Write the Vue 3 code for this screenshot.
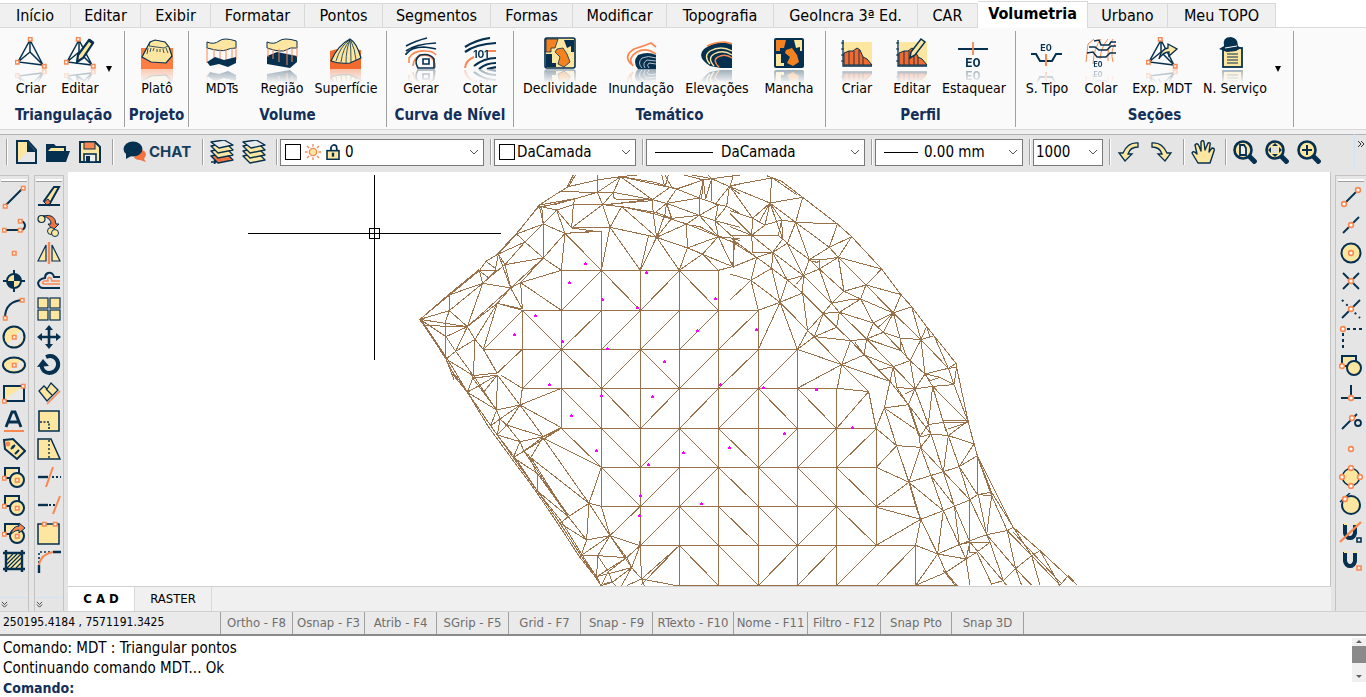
<script setup>
import { ref } from 'vue'

const N = '#06304f'
const O = '#f98850'
const C = '#fce6a0'

const sq = (x, y) => `<rect x="${x - 1.5}" y="${y - 1.5}" width="3.5" height="3.5" fill="#fff" stroke="${O}" stroke-width="1.5"/>`
const dot = (x, y) => `<circle cx="${x}" cy="${y}" r="2.4" fill="#fff" stroke="${O}" stroke-width="1.6"/>`
const ln = (d, w = 2, c = N, f = 'none') => `<path d="${d}" fill="${f}" stroke="${c}" stroke-width="${w}"/>`
const word = (x, y, s, t) => `<text x="${x}" y="${y}" font-family="Inter, sans-serif" font-size="${s}" font-weight="700" text-anchor="middle" fill="${N}">${t}</text>`

const tin = ln('M15 3 3 25 28 28ZM15 3 15 15 3 25M15 15 28 28', 1.5)
const shapes = ln('M3 3H17V13H3Z', 2, N, '#e8e8e8') + `<path d="M4 4H16L4 12Z" fill="${C}"/>` + `<circle cx="15" cy="15" r="7" fill="${C}" stroke="${N}" stroke-width="2"/>`
const magnifier = `<circle cx="10" cy="10" r="8.5" fill="${C}" stroke="${N}" stroke-width="2.6"/><path d="M16 16 23 23" stroke="${N}" stroke-width="5"/>`
const profile = `<rect x="3" y="5" width="28" height="23" fill="${C}"/><path d="M3 28V16L8 14 12 14 16 11 19 13 22 20 26 22 31 28Z" fill="#f26a2e" stroke="${N}" stroke-width="1"/>` + ln('M2 3V29H31', 1.3) + ln('M8 14V28M13 14V28M18 13V28M22 20V28', .9) + ln('M0 6H3M0 12H3M0 18H3M0 24H3', 1.2)
const layers = (c) => `<g stroke="${N}" stroke-width="1.4" stroke-linejoin="round"><path d="M1 16 16 13 23 20 8 23Z" fill="${c}"/><path d="M1 11 16 8 23 15 8 18Z" fill="${C}"/><path d="M1 6 16 3 23 10 8 13Z" fill="${C}"/><path d="M1 2 14 0 23 5 9 8Z" fill="#e8eaec"/></g>`

const icons = {
  tin: tin + sq(15, 2) + sq(2, 25) + sq(29, 29),
  tinEdit: tin + sq(14, 2) + sq(2, 25) + sq(29, 29) + ln('M25 3 29 6 19 21 13 25 14 18Z', 2.2, N, C) + ln('M25 3 29 6', 3),
  plateau: `<rect y="11" width="32" height="21" fill="#fa7d43"/><path d="M1 20 9 5 14 3 24 5 28 10 31 19 25 26 10 25Z" fill="${C}" stroke="${N}" stroke-width="1.2"/>` + ln('M9 5 8 9 23 11 27 9M7 11 6 17M10 11 9 15M13 11 12 14M16 12V15M19 12V15M22 12 23 16M25 11 27 16', .8),
  mdts: `<path d="M1 5Q8 8 13 4T30 4L30 11Q24 11 20 13T1 11Z" fill="${C}" stroke="${N}" stroke-width="1"/>` + ln('M1 11V26M8 12V24M14 12V22M20 12V26M26 11V24M30 10V23', 1, O) + `<path d="M1 25 9 20 18 23 30 20V26L22 30 13 27 4 29Z" fill="${N}"/>`,
  region: `<path d="M1 5Q8 8 13 4T31 4V11Q24 10 20 13T1 11Z" fill="${C}" stroke="${N}" stroke-width="1"/><path d="M1 19 11 15 31 19V25L24 31 1 27Z" fill="${N}"/>` + ln('M2 11V20M7 12V22M13 12V25M21 12V28M26 11V25M31 10V20', 1, O),
  surface: `<path d="M0 14 7 12 31 13V32H0Z" fill="#f26a2e"/><path d="M1 24Q8 8 20 2Q27 6 31 21L20 26Q9 27 1 24Z" fill="${C}" stroke="${N}" stroke-width="1.2"/>` + ln('M19 3Q10 10 6 24M20 3Q13 11 11 25M20 3Q16 12 16 26M20 3Q21 12 21 25M21 4Q25 12 26 23', .8),
  contour: ln('M1 9Q10 4 22 1M1 14Q10 7 31 6M1 18V17Q6 10 19 10Q27 11 31 12', 1.7) + ln('M4 26 4 21Q9 13 21 14Q28 14 31 18M8 29Q9 18 20 18Q28 19 30 27L30 31', 1.6, O) + ln('M13 31Q8 23 15 18Q25 16 29 22V31ZM18 22H24V27H18Z', 1.6),
  contourTag: ln('M1 10Q12 3 26 1M1 15Q12 7 32 6', 2.2) + ln('M1 31Q2 23 10 20M24 14H32', 2, O) + word(17, 21, 10, '101') + ln('M10 29Q20 21 32 21M15 32Q22 26 32 26M23 32 32 30', 2.2),
  slope: `<rect x="1" y="1" width="30" height="30" rx="2" fill="${C}"/><path d="M2 2H14L11 11H7V15H2ZM13 12 19 11 23 17 26 25 20 30 14 27 16 20 11 15Z" fill="#f58220"/><path d="M20 3H30V15H27V9L23 11ZM2 17H8V26H12V30H2Z" fill="${N}"/><path d="M2 2H14L11 11H7V15H2ZM13 12 19 11 23 17 26 25 20 30 14 27 16 20 11 15Z" fill="none" stroke="${N}" stroke-width=".8"/><rect x="1" y="1" width="30" height="30" rx="2" fill="none" stroke="${N}" stroke-width="1.6"/>`,
  flood: ln('M6 27Q-2 19 9 12Q19 9 26 6L31 10M8 29Q2 21 12 15Q21 10 31 17', 1.8, O) + `<path d="M13 32Q7 25 13 18Q23 14 31 18V32Z" fill="${N}"/>` + ln('M17 31Q12 26 17 21Q23 18 31 21M20 31Q17 26 22 23L31 24M24 31Q21 28 24 26L31 27', .8, '#dfe3e8'),
  elevation: `<path d="M9 29Q-5 20 3 12Q10 6 23 5L31 6V31H20Z" fill="${N}"/>` + ln('M6 9Q14 5 24 5L31 7', 1.5, O) + ln('M9 27Q2 19 9 14Q20 8 31 14', 1.4, C) + ln('M13 29Q6 21 13 17Q22 12 31 18', 1.4, C) + ln('M18 30Q11 23 17 20Q24 16 31 21', 1.4, O),
  spot: `<rect x="1" y="1" width="30" height="30" rx="2" fill="${N}"/><path d="M3 3H13L11 11H7V14H3ZM13 13 19 11 24 18 26 25 20 29 14 26 17 20 12 16Z" fill="#f58220"/><path d="M21 3H29V14H27V10L23 11ZM3 17H8V26H11V29H3Z" fill="${C}"/>`,
  profile,
  profileEdit: profile + ln('M25 2 29 5 19 18 14 21 15 15Z', 1.5, N, C),
  stake: ln('M0 12H30', 2) + ln('M15 5V18', 1.8, O) + word(15, 30, 12, 'E0'),
  section: word(15, 14, 9, 'E0') + ln('M0 17H5L9 24H21L25 17H31', 2) + ln('M15 17V29', 2, O),
  paste: ln('M9 2 3 7 1 25M16 2Q9 10 8 27M23 2Q16 10 15 22M28 2Q22 9 23 24M30 7Q25 14 28 25', 1, O) + ln('M9 4 14 3 16 8H24L26 5H31M4 10 10 10 14 13H22L26 9H31M2 16 8 15 12 20H21L25 16H31', 1.5) + word(13, 30, 7, 'E0'),
  tinExport: tin + sq(14, 2) + sq(2, 25) + sq(29, 29) + `<path d="M13 22Q15 12 22 11V7L31 12 23 19V15Q17 15 13 22Z" fill="${C}" stroke="${N}" stroke-width="1.3"/>`,
  service: `<rect x="4" y="11" width="19" height="19" fill="${C}" stroke="${N}" stroke-width="1.8"/>` + ln('M8 17H19M8 20H19M8 23H19M8 26H19', 1.2) + `<path d="M0 12 5 9Q3 0 12 0Q19 1 19 9L22 11 17 14 8 15Z" fill="${N}"/><path d="M6 11 18 9" stroke="#fff" stroke-width="1"/>`,

  newFile: `<path d="M3 1H14L22 10V23H3Z" fill="#e8e8e8" stroke="${N}" stroke-width="2"/><path d="M4 2H13V12L4 21Z" fill="${C}"/><path d="M13 1 22 12H13Z" fill="${N}"/>`,
  open: `<path d="M0 22V4H8L10 6H20V11H24L20 22Z" fill="${N}"/><path d="M2 11 5 8H18V11Z" fill="${C}"/>`,
  save: `<path d="M2 2H17L22 7V22H2Z" fill="${C}" stroke="${N}" stroke-width="2"/><rect x="6" y="2" width="11" height="7" fill="${O}" stroke="${N}"/><rect x="6" y="14" width="12" height="8" fill="#eee" stroke="${N}" stroke-width="1.6"/><rect x="8" y="16" width="4" height="6" fill="${N}"/>`,
  chat: `<path d="M19 10Q23 11 23 15L21 19 23 22 17 20Q12 20 11 17Z" fill="#f07340"/><ellipse cx="10" cy="9" rx="9.5" ry="7.5" fill="${N}"/><path d="M3 12 3 19 10 15Z" fill="${N}"/>`,
  layerPick: layers('#f07340') + ln('M1 22H6M4 20 6 22 4 24', 1.4),
  layers: layers(C),
  undo: `<path d="M21 3Q11 2 6 13H2L8 21 15 14H11Q13 7 21 7Z" fill="${C}" stroke="${N}" stroke-width="1.3"/>`,
  redo: `<path d="M3 3Q13 2 18 13H22L16 21 9 14H13Q11 7 3 7Z" fill="${C}" stroke="${N}" stroke-width="1.3"/>`,
  hand: `<path d="M7 23 1 13Q2 10 6 14L4 5Q6 2 8 6L10 11 10 2Q12-1 13 2L14 10 17 3Q20 2 19 5L18 12 21 8Q24 8 23 11L19 23Z" fill="${C}" stroke="${N}" stroke-width="1.4" stroke-linejoin="round"/>`,
  zoomPage: magnifier + `<path d="M7 5H11L13 8V15H7Z" fill="#eee" stroke="${N}" stroke-width="1.8"/>`,
  zoomAll: magnifier + `<path d="M10 3 13 6H7ZM10 17 13 14H7ZM3 10 6 7V13ZM17 10 14 7V13Z" fill="${N}"/><rect x="7" y="7" width="6" height="6" fill="#ddd"/>`,
  zoomIn: magnifier + ln('M10 5V15M5 10H15', 2),

  line: ln('M3 21 21 3', 2) + sq(3, 21) + sq(21, 3),
  polyline: ln('M2 17H18Q23 17 23 12Q22 8 18 8', 2) + sq(2, 17) + sq(18, 17) + sq(18, 8),
  point: sq(12, 12),
  target: ln('M12 1V23M1 12H23', 2) + `<circle cx="12" cy="12" r="7" fill="${C}" stroke="${N}" stroke-width="2"/><path d="M12 5A7 7 0 0 1 19 12H12ZM12 19A7 7 0 0 1 5 12H12Z" fill="${N}"/>`,
  arc: ln('M3 21Q3 4 21 3', 2) + sq(3, 21) + sq(20, 3),
  circle: `<circle cx="12" cy="12" r="10.5" fill="${C}" stroke="${N}" stroke-width="2"/><path d="M12 12 19 5A10 10 0 0 1 5 19Z" fill="#e8e8e8"/>` + sq(12, 12),
  ellipse: `<ellipse cx="12" cy="12" rx="11" ry="7.5" fill="${C}" stroke="${N}" stroke-width="2"/><path d="M12 12 20 8Q24 12 17 17L7 17Z" fill="#e8e8e8"/>` + sq(12, 12),
  rect: `<rect x="2" y="5" width="20" height="15" fill="#e8e8e8" stroke="${N}" stroke-width="2"/><path d="M3 6H20L3 18Z" fill="${C}"/>` + sq(2, 20) + sq(21, 5),
  letter: ln('M4 18 10 3H13L19 18M7 13H16', 2.8) + ln('M2 22H22', 2, O),
  tag: `<path d="M2 3 11 2 23 14 15 22 3 12Z" fill="${C}" stroke="${N}" stroke-width="2"/><circle cx="6" cy="7" r="2.4" fill="${O}"/>` + ln('M9 12 13 8M10 9 12 11M13 17 17 13', 2),
  shapes: shapes + sq(2, 13) + sq(15, 15),
  shapesArrow: shapes + `<path d="M9 13Q11 5 17 5V2L23 7 17 12V9Q13 9 9 13Z" fill="${O}" stroke="${N}"/>` + sq(2, 13) + sq(15, 15),
  hatch: `<rect x="5" y="5" width="14" height="14" fill="${C}"/>` + ln('M5 11 11 5M5 15 15 5M5 19 19 5M9 19 19 9M14 19 19 14', 1.2) + ln('M4 1V23M20 1V23M1 4H23M1 20H23', 2.4),
  erase: `<path d="M7 16 17 2H22L12 20Z" fill="${C}" stroke="${N}" stroke-width="2"/><path d="M7 17 11 14 14 18 10 20Z" fill="#f07340" stroke="${N}"/>` + ln('M1 20H23', 2),
  copy: `<circle cx="4.500" cy="6" r="3.500" fill="${C}" stroke="${N}" stroke-width="1.2"/><path d="M6 3Q18 0 19 11H22L16 17 11 11H14Q14 5 6 3Z" fill="#f07340" stroke="${N}"/><circle cx="14" cy="18" r="3.500" fill="${C}" stroke="${N}"/><circle cx="18" cy="20" r="3.500" fill="${C}" stroke="${N}"/>`,
  mirror: ln('M1 20 9 4V20ZM23 20 15 4V20Z', 1.2, N, C) + ln('M12 1V23', 2.4, O),
  offset: ln('M23 8H17Q16 3 11 4 8 5 8 9 2 10 1 14 2 19 6 19H23', 2) + ln('M23 15H7Q4 14 7 12H11Q10 7 14 9L15 12H23', 1.5, O),
  array: [[1, 1], [13, 1], [1, 13], [13, 13]].map(([x, y]) => `<rect x="${x}" y="${y}" width="10" height="10" fill="${C}" stroke="${N}" stroke-width="1.2"/>`).join(''),
  move: ln('M12 3V21M3 12H21', 2.6) + `<path d="M12 0 16 5H8ZM12 24 16 19H8ZM0 12 5 8V16ZM24 12 19 8V16Z" fill="${N}"/>`,
  rotate: ln('M9 4Q16 1 20 7 23 13 18 18 12 22 7 18 4 15 5 12', 4) + `<path d="M0 14 6 6 12 13Z" fill="${N}"/>`,
  align: `<path d="M2 10 7 5 10 8 14 2 21 9 10 20Z" fill="${C}" stroke="${N}" stroke-width="1.3"/>` + ln('M9 8 15 14', 1.3) + ln('M10 23 23 10', 1.6, O),
  scale: ln('M2 2H22V22H2Z', 1.6, N, C) + `<path d="M3 13H12V21" fill="none" stroke="${N}" stroke-width="1.6" stroke-dasharray="2 1.500"/>`,
  stretch: ln('M1 2H14L23 22H1Z', 1.5, N, C) + `<path d="M12 3V21" fill="none" stroke="${N}" stroke-width="1.4" stroke-dasharray="2 2"/>`,
  trim: ln('M1 12H11', 2.4) + ln('M9 22 16 2', 2, O) + `<path d="M15 12H24" stroke="${N}" stroke-width="2" stroke-dasharray="2 2"/>`,
  extend: ln('M1 12H11', 2.4) + ln('M16 21 23 3', 2, O) + `<path d="M12 12H19" stroke="${N}" stroke-width="2" stroke-dasharray="2 2"/>`,
  breakAt: ln('M1 3H22V23H1Z', 1.5, N, C) + sq(7, 3) + sq(18, 3),
  fillet: `<path d="M2 14V3H14" fill="none" stroke="${N}" stroke-width="1.6" stroke-dasharray="2 2"/>` + ln('M2 24V16M16 3H24', 2.4) + ln('M2 16Q4 5 16 3', 2, O),

  endpoint: ln('M5 19 19 5', 1.8) + dot(5, 19) + dot(19, 5),
  midpoint: ln('M4 20 20 4', 1.8) + dot(12, 12),
  center: `<circle cx="12" cy="12" r="9.500" fill="${C}" stroke="${N}" stroke-width="2"/>` + dot(12, 12),
  cross: ln('M4 4 20 20M4 20 20 4', 1.8) + dot(12, 12),
  apparent: ln('M3 21 21 3', 1.8) + `<path d="M3 3 21 21" stroke="${N}" stroke-width="2" stroke-dasharray="2 4"/>` + dot(12, 12),
  extension: `<path d="M8 4H24M4 8V24" stroke="${N}" stroke-width="2" stroke-dasharray="3 3"/>` + dot(4, 4),
  insert: shapes + dot(3, 13),
  perpendicular: ln('M12 4V16M2 17H22', 2) + dot(12, 17),
  tangent: ln('M3 20 18 5', 1.8) + `<circle cx="19" cy="14" r="3" fill="none" stroke="${N}" stroke-width="1.8"/>` + dot(13, 9),
  node: dot(12, 12),
  quadrant: `<circle cx="12" cy="12" r="8.500" fill="${C}" stroke="${N}" stroke-width="1.5"/>` + dot(12, 3) + dot(3, 12) + dot(21, 12) + dot(12, 21),
  near: ln('M1 9 11 0', 1.5) + `<circle cx="12" cy="12" r="9" fill="${C}" stroke="${N}" stroke-width="2"/>` + dot(6, 6),
  snapOff: ln('M6 3V12Q7 17 11 17 15 17 16 12V3', 4) + `<path d="M5 3H8M14 3H18" stroke="${C}" stroke-width="2"/>` + ln('M1 21 22 1', 2.4, O) + ln('M18 17H22V21H18Z', 1.6),
  snapOn: ln('M6 3V12Q7 17 11 17 15 17 16 12V3', 4) + `<path d="M5 3H8M14 3H18" stroke="${C}" stroke-width="2"/>` + ln('M18 17H22V21H18Z', 1.6, O),
  sun: `<circle cx="12" cy="12" r="5.500" fill="${C}" stroke="${O}" stroke-width="2"/>` + ln('M12 0V4M12 20V24M0 12H4M20 12H24M3 3 6 6M18 18 21 21M3 21 6 18M18 6 21 3', 2, O),
  lock: ln('M9 10V5Q12-1 17 3L18 9', 2.6) + `<rect x="3" y="10" width="18" height="13" fill="${C}" stroke="${N}" stroke-width="2.4"/><path d="M12 13V19" stroke="${N}" stroke-width="3.500"/>`
}

const activeTab = ref('Volumetria')
const tabs = [
  ['Início', 71], ['Editar', 70], ['Exibir', 70], ['Formatar', 94], ['Pontos', 78], ['Segmentos', 108], ['Formas', 82],
  ['Modificar', 94], ['Topografia', 107], ['GeoIncra 3ª Ed.', 144], ['CAR', 60], ['Volumetria', 110], ['Urbano', 80], ['Meu TOPO', 108]
]
const groups = [
  { title: 'Triangulação', w: 122, more: true, tools: [['tin', 'Criar', 50], ['tinEdit', 'Editar', 48]] },
  { title: 'Projeto', w: 64, tools: [['plateau', 'Platô', 58]] },
  { title: 'Volume', w: 198, tools: [['mdts', 'MDTs', 60], ['region', 'Região', 60], ['surface', 'Superfície', 68]] },
  { title: 'Curva de Nível', w: 127, tools: [['contour', 'Gerar', 62], ['contourTag', 'Cotar', 56]] },
  { title: 'Temático', w: 312, tools: [['slope', 'Declividade', 86], ['flood', 'Inundação', 76], ['elevation', 'Elevações', 76], ['spot', 'Mancha', 68]] },
  { title: 'Perfil', w: 190, tools: [['profile', 'Criar', 56], ['profileEdit', 'Editar', 54], ['stake', 'Estaquear', 70]] },
  { title: 'Seções', w: 278, more: true, tools: [['section', 'S. Tipo', 56], ['paste', 'Colar', 52], ['tinExport', 'Exp. MDT', 70], ['service', 'N. Serviço', 76]] }
]
const drawTools = ['line', 'polyline', 'point', 'target', 'arc', 'circle', 'ellipse', 'rect', 'letter', 'tag', 'shapes', 'shapes', 'shapesArrow', 'hatch']
const editTools = ['erase', 'copy', 'mirror', 'offset', 'array', 'move', 'rotate', 'align', 'scale', 'stretch', 'trim', 'extend', 'breakAt', 'fillet']
const snapTools = ['endpoint', 'midpoint', 'center', 'cross', 'apparent', 'extension', 'insert', 'perpendicular', 'tangent', 'node', 'quadrant', 'near', 'snapOff', 'snapOn']
const modes = [
  ['Ortho - F8', 72], ['Osnap - F3', 72], ['Atrib - F4', 72], ['SGrip - F5', 72], ['Grid - F7', 72], ['Snap - F9', 72],
  ['RTexto - F10', 81], ['Nome - F11', 74], ['Filtro - F12', 73], ['Snap Pto', 71], ['Snap 3D', 72]
]

/* Terrain mesh: regular grid, then irregular border triangles in thirds of a pixel */
const X = [522, 561, 601, 640, 679, 718, 758, 797, 836, 876, 915]
const Y = [270, 310, 349, 388, 428, 467, 506, 545, 585]
const diagonals = [
  ' /\\/\\     ', '\\/////    ', '/\\/\\///   ', ' \\\\///\\\\ ', ' \\\\/\\\\///', '  \\//\\\\\\\\', '   /\\\\\\/\\', '   /\\\\////'
]
let grid = 'M561 270H718M522 310H758M483 349H797M522 388H836M561 428H876M601 467H876M601 506H915M640 545H915M676 585H957' +
  'M522 310V388M561 270V428M601 232V506M640 270V545M679 270V585M718 270V585M758 310V585M797 349V585M836 388V585M876 428V545M915 545V585M483 349 522 310'
diagonals.forEach((row, j) => [...row].forEach((c, i) => {
  if (c === '\\') grid += `M${X[i]} ${Y[j]} ${X[i + 1]} ${Y[j + 1]}`
  if (c === '/') grid += `M${X[i + 1]} ${Y[j]} ${X[i]} ${Y[j + 1]}`
}))

const regions = [
  { x: 410, y: 174, d: '497,3-475,38-450,53-388,93-320,180-265,240-228,262-208,290-120,362-30,436-108,555-140,617;490,3-472,38;386,98-318,180-262,240;206,288-118,360-28,438;30,440-45,455-108,555-132,617;36,440-112,555-150,617;475,38-562,18-632,8;562,3-562,55;450,53-562,55-610,55-727,77;388,93-500,73-562,55;388,98-440,90-500,73;390,100-495,75;475,38-497,3;632,8-610,55;632,8-562,55;632,8-735,25-780,40;632,8-680,3;632,8-727,77;632,8-800,45;562,55-578,92;610,55-578,92;610,55-610,68-615,75-727,77;578,92-610,90-727,75;578,92-727,80;400,100-440,108-490,92-578,92-635,98-735,120-830,150-925,188-990,212;635,98-740,116-785,133;830,152-870,158-925,188;495,75-490,92-485,162-600,160;440,108-485,162;440,108-465,178;440,108-400,150;578,92-485,162;578,92-600,160;635,98-600,160;635,98-740,190;600,160-740,190;600,160-574,289;600,160-691,289;465,178-574,172-574,289;465,178-555,172-485,162;465,178-574,289;465,178-454,289;465,178-400,150;465,178-400,252;395,95-400,150-400,252;388,95-400,150;320,180-400,150-345,204-400,252;320,180-345,204-265,240;345,204-285,272;265,240-285,272-400,252;265,240-255,290;228,262-258,285;208,290-258,290-236,312-208,290-218,328-236,312-285,272;218,328-302,342;285,272-302,342-332,326-400,252-302,342-337,405;265,240-302,342;332,326-337,405;332,326-454,289-400,252;332,326-454,409;262,388-302,342-172,458;262,388-337,405;262,388-220,526;262,388-337,409;262,388-172,458;262,388-195,496;218,328-120,362-118,410-218,328-172,458-118,410-30,436-105,448-172,458;118,410-105,448-108,488-30,436;45,455-172,458-108,488-108,555-190,605-137,532-108,488;172,458-137,532-195,496-172,458;195,496-220,526-262,597-190,605;195,496-190,605;137,532-108,555;337,526-262,597;220,526-258,592;765,3-785,40;775,3-765,40;755,3-765,40;822,3-880,18-905,14-990,3;880,18-868,72;880,18-887,75-905,14;845,3-905,14-958,38;895,3-905,14-905,80;800,45-880,18-875,72;785,40-800,45-868,72-925,92-950,97;800,45-770,88;780,40-727,77-770,88-868,72;770,88-868,124;770,88-730,120-740,190;727,77-730,120;770,88-765,120-740,190;770,88-785,133-868,124-830,150-740,190;868,72-868,124-915,140-950,97;925,92-915,140-925,188;830,150-832,222-740,190-691,289;740,190-716,184-691,289;740,190-808,289-832,222-925,188-878,240-832,222-968,278-925,188;878,240-808,289;878,240-925,289-968,278-975,195;958,38-915,92;958,38-950,97-990,118;958,38-990,30;958,38-990,60;868,124-925,92;915,140-990,160;868,124-925,188;915,140-975,195-990,200;925,188-990,195;785,133-740,190' },
  { x: 730, y: 174, d: '110,5-155,22-218,70-322,150-365,188-455,285-513,362-545,398-590,458-612,485-678,568-680,580-715,745-742,845-785,955-850,1060-930,1130-1042,1234;125,10-200,62;0,35-125,12-120,87;0,38-120,87-218,70-197,145-322,150;120,87-197,145;0,38-68,133;0,38-10,3;120,87-68,133;120,87-90,140;120,87-105,153;120,87-155,138-197,145;0,110-68,133-105,153-155,138;105,153-65,184-68,133;0,118-65,184;0,158-65,184-145,184-158,195;155,138-158,195;155,138-145,184;120,87-158,195-172,208-197,145-238,257;197,145-298,220-322,150;298,220-365,188;298,220-238,257;298,220-325,250-365,188;325,250-270,258-238,257-268,285-325,250-455,285;245,262-262,265-270,258-268,285;325,250-342,352;325,250-408,333-455,285;342,352-408,333-513,362;408,333-392,375-342,352;408,333-490,417-392,375;268,285-342,352;268,285-305,388;268,285-220,305-238,257-172,208-220,305;158,195-128,235-172,208;65,184-128,235-68,235-65,184;0,185-65,184;0,200-80,250-0,190;10,195-10,278-80,250-128,235-125,283-80,250-63,319;128,235-172,318;128,235-220,305;0,260-10,278;63,319-125,283;63,319-0,378;63,319-85,409;63,319-150,385;0,300-63,319;125,283-150,385-172,318-125,283;172,318-220,305-200,330;172,318-218,357-150,385-85,409;218,357-220,305;150,385-85,526;150,385-202,526;150,385-233,470-218,357;233,470-202,526;220,305-305,388-342,352;218,357-320,460-362,500;218,357-280,418-305,388-365,376-392,375;305,388-328,415-280,418;328,415-430,447-392,375-328,415-320,460;328,415-410,495;430,447-490,417-460,475-430,447-410,495;490,417-445,460;490,417-513,362-520,370-545,398-490,417-573,497-545,398;573,497-590,458-600,490;573,497-612,485;460,475-510,492-573,497;490,417-510,492-513,530-540,560;510,495-530,550;410,495-460,475-513,530-410,495-402,543-362,500-410,495;280,418-253,488-320,460;362,500-253,488-233,470-280,418;253,488-202,526-335,572-253,488;362,500-335,572-402,543;335,572-202,643;335,572-322,643;335,572-480,622;335,572-416,653;362,500-480,622;375,505-390,525-402,543-490,578;410,495-490,578-540,560-573,497-585,600-540,560-555,645;402,543-445,588-490,578-480,622-445,588;490,578-500,640;490,578-555,645;480,622-535,692-463,702-480,622;573,497-655,583-612,485;655,583-678,568;585,600-655,583-680,580-672,632-655,583;585,600-630,610-672,632;585,600-608,637-672,632-715,745;585,600-600,620-630,610;608,637-715,745;585,600-555,645-608,637;555,645-500,640-535,692-555,645-595,752-608,637-640,745-655,785;525,660-555,645;608,640-648,770;595,752-640,745-715,745-655,765;640,740-715,740-655,785;715,745-732,810-655,785-603,780-568,790;535,692-568,790-572,820-603,780;537,692-571,790;535,692-603,780-595,752-568,790;463,702-438,763-416,653;322,643-416,653-320,763;463,702-500,815-438,763;463,702-555,765;500,815-572,820-537,925-500,815-439,880;572,820-640,893-603,780;655,785-640,893;655,785-688,878-742,845;732,810-688,878-640,893-537,925;688,878-742,962;688,878-720,978;640,893-673,995;572,820-603,905-640,1010;603,905-673,995;640,893-720,978;537,925-439,880;537,925-439,997;537,925-557,997-572,1036;540,930-572,1036;537,925-640,1010;439,1000-572,1036-439,1114;572,1036-640,1010-720,978-742,962-785,965-785,955-742,962-742,845;720,978-770,1082-745,962;785,965-770,1082;785,965-832,1070;745,855-785,965;742,845-850,1060;720,978-720,1105;673,995-688,1112-640,1010-623,1140;673,995-720,1105;572,1036-557,1114-623,1140-572,1036;623,1140-688,1112-770,1082-832,1070-850,1060;623,1140-708,1155-720,1105-780,1105-770,1082;720,1105-720,1135-740,1135-780,1105;708,1155-740,1135;708,1155-720,1234;720,1105-688,1112-708,1155-648,1195-557,1234-623,1140-648,1195-680,1234;640,1190-676,1234;740,1135-785,1230-820,1220-857,1184-905,1145-930,1130;720,1105-830,1234;780,1105-820,1220;770,1082-857,1184-832,1070;857,1184-875,1234;857,1184-905,1234;832,1070-905,1145-930,1234;850,1060-905,1145-990,1234-1015,1205;850,1075-995,1230;930,1130-990,1234;1015,1205-1042,1234' },
  { x: 410, y: 375, d: '130,0-172,52-242,152-310,248-382,348-450,445-513,542-573,632;136,0-178,60-262,180-318,252-382,348-455,440-518,542-560,605;142,0-172,52-235,155-303,248-375,345-443,445-508,545-566,618;172,52-188,10-262,0;185,0-190,12-260,105-172,52-262,0-222,50;195,0-190,12;190,0-222,50-260,105;262,0-260,105;262,0-330,90;272,0-337,40-330,90-454,40;330,90-454,158;330,90-400,185;330,90-290,150;330,90-260,105-242,152;330,90-270,132;260,105-270,132-262,180;270,132-242,152;270,132-290,150-400,185;290,150-262,180;290,150-330,200;262,180-330,200-400,185;330,200-310,248;330,200-342,228-400,185;310,248-342,228-362,248-400,185-454,158;342,228-454,158;310,248-454,160;400,190-574,277;400,190-537,385;362,248-537,385;342,228-475,425;355,238-382,300-382,348;362,248-475,425;310,248-382,295-475,425;382,348-475,425-450,445;390,300-475,420;475,425-537,385;475,425-530,495-450,445;574,277-537,385-574,394-600,482-537,385-530,495-600,482-513,542-530,495;513,542-563,542-650,548-600,482-563,542-560,605;600,482-665,578-690,512-600,482;600,482-691,394;690,512-650,548-665,578;690,512-691,394;690,512-695,612;563,542-595,590-607,622-573,632-595,590-650,548-560,605-665,578-607,622;513,542-560,605-573,632;582,625-607,622-618,632;665,578-635,632;665,578-695,612-650,632;695,612-703,632;695,612-808,512;695,612-800,632' }
]
const meshes = regions.map(r => ({ ...r, d: r.d.split(';').map(p => 'M' + p.replaceAll('-', 'L')).join('') }))

const points = [
  [585, 263], [569, 282], [646, 272], [602, 299], [637, 307], [715, 298], [535, 315], [514, 334], [562, 341], [607, 348], [697, 330], [664, 361],
  [756, 329], [763, 387], [816, 389], [852, 427], [784, 433], [549, 384], [601, 395], [652, 396], [720, 384], [571, 415], [596, 450], [648, 464],
  [683, 452], [729, 447], [640, 495], [639, 515], [701, 503]
]
</script>

<template>
  <div class="app">
    <nav class="tabs">
      <button v-for="[name, w] in tabs" :key="name" class="tab" :class="{ active: name === activeTab }" :style="{ width: w + 'px' }" @click="activeTab = name">{{ name }}</button>
    </nav>

    <header class="ribbon">
      <section v-for="g in groups" :key="g.title" class="group" :style="{ width: g.w + 'px' }">
        <div class="tools">
          <button v-for="[icon, label, w] in g.tools" :key="label" class="tool" :style="{ width: w + 'px' }">
            <svg class="big" viewBox="0 0 32 32" v-html="icons[icon]"></svg>
            <span>{{ label }}</span>
          </button>
          <button v-if="g.more" class="more" :aria-label="'Mais ' + g.title"></button>
        </div>
        <h2>{{ g.title }}</h2>
      </section>
    </header>

    <div class="bar">
      <i class="sep"></i>
      <button class="ico" aria-label="Novo"><svg viewBox="0 0 24 24" v-html="icons.newFile"></svg></button>
      <button class="ico" aria-label="Abrir"><svg viewBox="0 0 24 24" v-html="icons.open"></svg></button>
      <button class="ico" aria-label="Salvar"><svg viewBox="0 0 24 24" v-html="icons.save"></svg></button>
      <i class="sep"></i>
      <button class="chat"><svg viewBox="0 0 24 24" v-html="icons.chat"></svg>CHAT</button>
      <i class="sep"></i>
      <button class="ico" aria-label="Camada atual"><svg viewBox="0 0 24 24" v-html="icons.layerPick"></svg></button>
      <button class="ico" aria-label="Camadas"><svg viewBox="0 0 24 24" v-html="icons.layers"></svg></button>
      <i class="sep"></i>
      <div class="combo layer">
        <i class="swatch"></i>
        <svg class="mini" viewBox="0 0 24 24" v-html="icons.sun"></svg>
        <svg class="mini" viewBox="0 0 24 24" v-html="icons.lock"></svg>
        <select aria-label="Camada"><option>0</option></select>
        <svg class="chev" viewBox="0 0 10 6"><path d="M1 1 5 5 9 1" /></svg>
      </div>
      <i class="sep"></i>
      <div class="combo color">
        <i class="swatch"></i>
        <select aria-label="Cor"><option>DaCamada</option></select>
        <svg class="chev" viewBox="0 0 10 6"><path d="M1 1 5 5 9 1" /></svg>
      </div>
      <i class="sep"></i>
      <div class="combo ltype">
        <i class="rule"></i>
        <select aria-label="Tipo de linha"><option>DaCamada</option></select>
        <svg class="chev" viewBox="0 0 10 6"><path d="M1 1 5 5 9 1" /></svg>
      </div>
      <i class="sep"></i>
      <div class="combo weight">
        <i class="rule"></i>
        <select aria-label="Espessura"><option>0.00 mm</option></select>
        <svg class="chev" viewBox="0 0 10 6"><path d="M1 1 5 5 9 1" /></svg>
      </div>
      <i class="sep"></i>
      <div class="combo scale">
        <select aria-label="Escala"><option>1000</option></select>
        <svg class="chev" viewBox="0 0 10 6"><path d="M1 1 5 5 9 1" /></svg>
      </div>
      <i class="sep"></i>
      <button class="ico" aria-label="Desfazer"><svg viewBox="0 0 24 24" v-html="icons.undo"></svg></button>
      <button class="ico" aria-label="Refazer"><svg viewBox="0 0 24 24" v-html="icons.redo"></svg></button>
      <i class="sep"></i>
      <button class="ico" aria-label="Mover vista"><svg viewBox="0 0 24 24" v-html="icons.hand"></svg></button>
      <i class="sep"></i>
      <button class="ico" aria-label="Zoom página"><svg viewBox="0 0 24 24" v-html="icons.zoomPage"></svg></button>
      <button class="ico" aria-label="Zoom tudo"><svg viewBox="0 0 24 24" v-html="icons.zoomAll"></svg></button>
      <button class="ico" aria-label="Aproximar"><svg viewBox="0 0 24 24" v-html="icons.zoomIn"></svg></button>
      <button class="overflow" aria-label="Mais botões"><svg viewBox="0 0 8 8"><path d="M1 1 4 4 1 7M4 1 7 4 4 7" /></svg></button>
    </div>

    <main class="work">
      <aside v-for="(list, k) in [drawTools, editTools]" :key="k" class="side">
        <i class="grip"></i>
        <button v-for="(t, i) in list" :key="i" :aria-label="t"><svg viewBox="0 0 24 24" v-html="icons[t]"></svg></button>
        <button class="down" aria-label="Mais"><svg viewBox="0 0 8 8"><path d="M1 1 4 4 7 1M1 4 4 7 7 4" /></svg></button>
      </aside>

      <div class="view">
        <div class="canvas">
          <svg width="100%" height="100%" role="img" aria-label="Malha triangular do terreno">
            <g transform="translate(-68 -172)" shape-rendering="crispEdges">
              <g class="mesh">
                <path :d="grid" transform="translate(.5 .5)" />
                <path v-for="m in meshes" :key="m.x + '-' + m.y" :d="m.d" :transform="`translate(${m.x} ${m.y}) scale(.3333)`" />
              </g>
              <path v-for="([x, y], i) in points" :key="i" class="pt" :d="`M${x - 1} ${y}h3v2h-3zM${x} ${y - 1}h1v1h-1z`" />
              <path class="cross" d="M248 233.500H501M374.500 175V360M369.500 228.500h10v10h-10z" />
            </g>
          </svg>
        </div>
        <div class="sheets">
          <button class="sheet on">C A D</button>
          <button class="sheet">RASTER</button>
        </div>
      </div>

      <aside class="side right">
        <i class="grip"></i>
        <button v-for="t in snapTools" :key="t" :aria-label="t"><svg viewBox="0 0 24 24" v-html="icons[t]"></svg></button>
      </aside>
    </main>

    <div class="status">
      <span class="coords">250195.4184 , 7571191.3425</span>
      <button v-for="[name, w] in modes" :key="name" :style="{ width: w + 'px' }">{{ name }}</button>
    </div>

    <footer class="console">
      <div class="log">
        <p>Comando: MDT : Triangular pontos</p>
        <p>Continuando comando MDT... Ok</p>
        <p class="prompt"><label for="cmd">Comando:</label><input id="cmd" type="text" autocomplete="off" /></p>
      </div>
      <div class="scroll"><i class="up"></i><i class="thumb"></i><i class="dn"></i></div>
    </footer>
  </div>
</template>

<style>
html, body, #app { height: 100%; }
body { margin: 0; overflow: hidden; }
</style>

<style scoped>
* { box-sizing: border-box; }
.app { min-height: 100%; display: flex; flex-direction: column; background: #e5e5e5; color: #000; font: 14px/18px "DejaVu Sans Condensed", "Noto Sans", sans-serif; }
button { margin: 0; padding: 0; border: 0; background: none; font: inherit; color: inherit; white-space: nowrap; }
svg { display: block; }
h2, p { margin: 0; }

.tabs { display: flex; align-items: flex-end; height: 28px; background: #fff; border-bottom: 1px solid #d9d9d9; font-size: 16px; }
.tab { height: 24px; background: #f0f0f0; border: 1px solid #d9d9d9; border-width: 1px 1px 0 0; }
.tab.active { height: 27px; padding-bottom: 3px; margin-bottom: -1px; background: #fff; font-weight: 700; }

.ribbon { display: flex; height: 102px; padding: 3px 3px 2px; background: #fafafa; border-bottom: 1px solid #d9d9d9; }
.group { display: flex; flex-direction: column; border-right: 1px solid #a0a0a0; }
.tools { display: flex; height: 75px; padding: 6px 0 0 3px; }
.tool { display: flex; flex-direction: column; align-items: center; }
.tool span { margin-top: 10px; }
.big { width: 32px; height: 32px; -webkit-box-reflect: below 0 linear-gradient(transparent 55%, rgba(0, 0, 0, .4)); }
.more { width: 10px; height: 64px; display: flex; align-items: center; justify-content: center; }
.more::after { content: ""; border: 3px solid transparent; border-top: 6px solid #000; border-bottom: 0; }
.group h2 { font-size: 15px; line-height: 18px; text-align: center; color: #12305a; }

.bar { display: flex; align-items: center; height: 42px; padding-bottom: 2px; border-top: 4px solid #f0f0f0; box-shadow: inset 0 1px #b4b4b4; }
.sep { flex: none; width: 2px; height: 26px; margin: 0 2px 0 6px; border-left: 1px solid #a0a0a0; border-right: 1px solid #fff; }
.ico { width: 32px; height: 28px; display: grid; place-items: center; }
.ico svg, .chat svg { width: 24px; height: 24px; }
.chat { display: flex; align-items: center; gap: 2px; width: 80px; padding-left: 7px; font: 700 15px/20px Inter, sans-serif; color: #163e5c; }
.combo { display: flex; align-items: center; height: 27px; padding: 0 4px; background: #fff; border: 1px solid #7a7a7a; font-size: 15px; }
.layer { width: 204px; gap: 4px; }
.color { width: 142px; gap: 2px; }
.ltype { width: 219px; gap: 8px; padding-left: 8px; }
.weight { width: 148px; gap: 6px; padding-left: 8px; }
.scale { width: 70px; padding-left: 2px; }
.combo select { flex: 1; min-width: 0; padding: 0; border: 0; background: none; appearance: none; font: inherit; color: inherit; }
.swatch { flex: none; width: 16px; height: 16px; border: 1px solid #000; }
.rule { flex: none; width: 58px; border-top: 1px solid #000; }
.weight .rule { width: 34px; }
.mini { flex: none; width: 16px; height: 16px; }
.chev { flex: none; width: 10px; height: 6px; }
.chev path { fill: none; stroke: #555; }
.overflow { align-self: stretch; width: 12px; margin-left: auto; border-left: 1px solid #cfe3f5; }
.overflow svg, .down svg { width: 8px; height: 8px; }
.overflow svg { margin: 0 0 16px 2px; }
.overflow path, .down path { fill: none; stroke: #333; }

.work { flex: 1; display: flex; min-height: 439px; }
.side { display: flex; flex-direction: column; align-items: center; width: 30px; margin: 3px 4px 0 0; border-right: 1px solid #c4c4c4; border-top: 1px solid #c4c4c4; }
.side:first-child { width: 29px; margin-right: 5px; }
.side + .side { border-left: 1px solid #c4c4c4; }
.side button { width: 28px; height: 28px; display: grid; place-items: center; }
.side svg { width: 24px; height: 24px; }
.side .grip { width: 26px; height: 3px; margin: 3px 0 1px; background: #fff; border-bottom: 1px solid #a0a0a0; }
.side .down { width: 28px; height: 14px; margin-top: auto; justify-content: start; padding-left: 1px; border-top: 1px solid #cfe3f5; }
.side .down svg { width: 7px; height: 7px; }
.side.right { width: 31px; margin: 3px 0 0 4px; border-left: 1px solid #c4c4c4; border-right: 0; }
.view { flex: 1; min-width: 0; display: flex; flex-direction: column; }
.canvas { flex: 1; min-height: 0; height: 414px; background: #fff; border-right: 1px solid #c4c4c4; border-bottom: 1px solid #d0d0d0; overflow: hidden; }
.mesh path { fill: none; stroke: #99714a; stroke-width: 1px; vector-effect: non-scaling-stroke; }
.pt { fill: #f0f; }
.cross { fill: none; stroke: #000; }
.sheets { display: flex; height: 24px; background: #f0f0f0; font-size: 13px; }
.sheet { width: 77px; border-right: 1px solid #d9d9d9; }
.sheet.on { width: 67px; background: #fff; font-weight: 700; }

.status { display: flex; height: 23px; border-top: 1px solid #d0d0d0; background: #eaeaea; font-size: 13px; }
.coords { width: 221px; padding-left: 3px; font-size: 12px; line-height: 20px; border-right: 1px solid #a0a0a0; }
.status button { border-right: 1px solid #a0a0a0; color: #6e6e6e; }

.console { display: flex; height: 64px; padding-top: 2px; background: #fff; border-top: 2px solid #8a8a8a; }
.log { flex: 1; padding-left: 3px; font-size: 15px; line-height: 20px; }
.prompt { display: flex; font-size: 14px; font-weight: 700; color: #12305a; }
.prompt input { flex: 1; height: 18px; padding: 0 4px; border: 0; outline: 0; font: inherit; font-weight: 400; }
.scroll { display: flex; flex-direction: column; align-items: center; width: 14px; margin-bottom: 16px; background: #f0f0f0; }
.thumb { width: 14px; height: 17px; background: #8a8a8a; }
.up, .dn { margin: 2px 0 3px; border: 3px solid transparent; border-bottom: 3px solid #606060; border-top: 0; }
.dn { margin: auto 0 4px; border-top: 3px solid #606060; border-bottom: 0; }
</style>
